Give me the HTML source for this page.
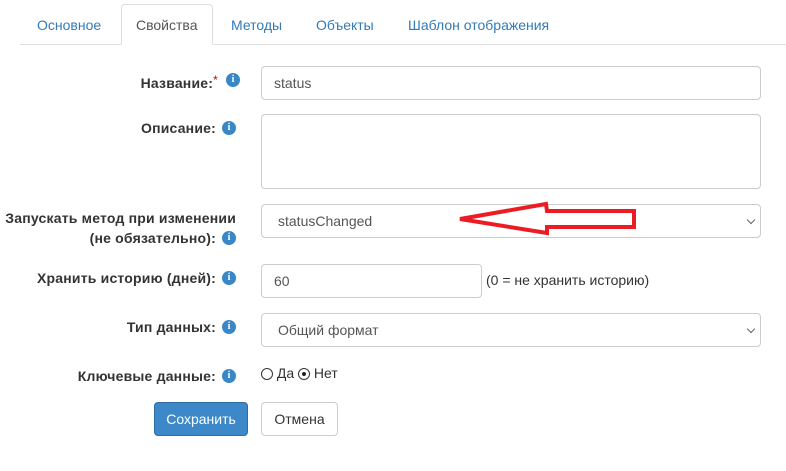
<!DOCTYPE html>
<html><head><meta charset="utf-8"><style>
body{margin:0;width:786px;height:471px;background:#fff;font-family:"Liberation Sans",Arial,sans-serif;font-size:14px;color:#333;position:relative;overflow:hidden}
.a{position:absolute}
.tab{position:absolute;top:17px;color:#337ab7;font-size:14px}
.line{position:absolute;left:20px;right:0;top:44px;height:1px;background:#ddd}
.act{position:absolute;left:121px;top:4px;width:92px;height:41px;border:1px solid #ddd;border-bottom:1px solid #fff;border-radius:4px 4px 0 0;background:#fff;box-sizing:border-box}
.lbl{position:absolute;right:570px;font-weight:bold;text-align:right;white-space:nowrap;line-height:20px;font-size:14px;letter-spacing:0.2px}
.i{display:inline-block;width:14px;height:14px;border-radius:50%;background:#3a87c8;color:#fff;font-size:10px;font-weight:bold;line-height:14px;text-align:center;font-family:"Liberation Serif",serif;letter-spacing:0}
.lbl .i{position:absolute;right:-20px;top:3px}
.in{position:absolute;border:1px solid #ccc;border-radius:4px;box-sizing:border-box;padding:0 12px;line-height:32px;color:#555}
.chev{position:absolute;right:6px;top:12px;width:5px;height:5px;border-right:1.5px solid #666;border-bottom:1.5px solid #666;transform:rotate(45deg)}
.rad{display:inline-block;width:12px;height:12px;border:1px solid #333;border-radius:50%;vertical-align:-2px;position:relative;box-sizing:border-box}
</style></head><body>
<div class="line"></div>
<div class="act"></div>
<div class="tab" style="left:37px">Основное</div>
<div class="tab" style="left:136px;color:#555">Свойства</div>
<div class="tab" style="left:231px">Методы</div>
<div class="tab" style="left:316px">Объекты</div>
<div class="tab" style="left:408px">Шаблон отображения</div>

<div class="lbl" style="top:70px;right:568px">Название:<span style="color:#c00;font-weight:normal;vertical-align:4px;font-size:12px">*</span><span class="i" style="right:-22px">i</span></div>
<div class="in" style="left:261px;top:66px;width:500px;height:34px">status</div>

<div class="lbl" style="top:118px">Описание:<span class="i">i</span></div>
<div class="in" style="left:261px;top:114px;width:500px;height:75px"></div>

<div class="lbl" style="top:208px;right:550px;">Запускать метод при изменении<br><span style="margin-right:20px">(не обязательно):</span><span class="i" style="top:23px;right:0">i</span></div>
<div class="in" style="left:261px;top:204px;width:500px;height:34px;padding-left:16px">statusChanged<div class="chev"></div></div>

<div class="lbl" style="top:268px">Хранить историю (дней):<span class="i">i</span></div>
<div class="in" style="left:261px;top:264px;width:221px;height:34px">60</div>
<div class="a" style="left:486px;top:272px;color:#333">(0 = не хранить историю)</div>

<div class="lbl" style="top:317px">Тип данных:<span class="i">i</span></div>
<div class="in" style="left:261px;top:313px;width:500px;height:34px;padding-left:16px">Общий формат<div class="chev"></div></div>

<div class="lbl" style="top:366px">Ключевые данные:<span class="i">i</span></div>
<div class="a" style="left:261px;top:365px"><span class="rad"></span> Да <span class="rad"><span style="position:absolute;left:3px;top:3px;width:4px;height:4px;border-radius:50%;background:#222"></span></span> Нет</div>

<div class="a" style="left:154px;top:402px;width:94px;height:34px;background:#3c88c9;border:1px solid #2e6da4;border-radius:4px;box-sizing:border-box;color:#fff;text-align:center;line-height:32px">Сохранить</div>
<div class="a" style="left:261px;top:402px;width:77px;height:34px;background:#fff;border:1px solid #ccc;border-radius:4px;box-sizing:border-box;text-align:center;line-height:32px">Отмена</div>

<svg class="a" style="left:0;top:0" width="786" height="471"><polygon points="460,219 546,204 547,211 634,211 634,227 547,227 547,233" fill="none" stroke="#ec1c24" stroke-width="4" stroke-linejoin="miter"/></svg>
</body></html>
